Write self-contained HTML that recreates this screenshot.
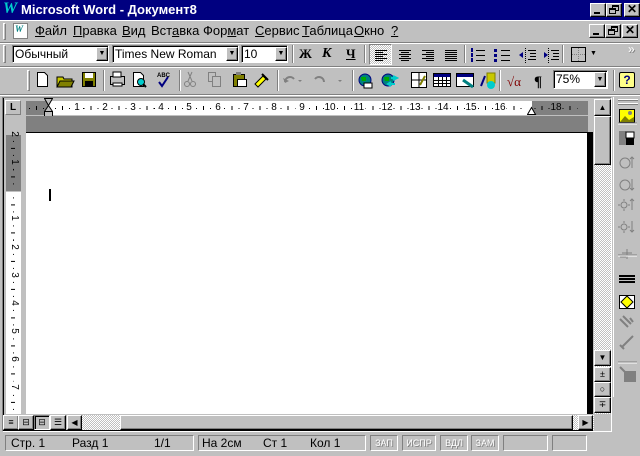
<!DOCTYPE html>
<html><head><meta charset="utf-8"><style>
*{margin:0;padding:0;box-sizing:border-box}
body{width:640px;height:456px;background:#c0c0c0;position:relative;overflow:hidden;font-family:"Liberation Sans",sans-serif;font-size:12px;color:#000}
.a{position:absolute}
.out{border:1px solid;border-color:#fff #000 #000 #fff;box-shadow:inset -1px -1px #808080;background:#c0c0c0}
.in{border:1px solid;border-color:#808080 #fff #fff #808080;}
.sunk{border:1px solid;border-color:#808080 #fff #fff #808080;box-shadow:inset 1px 1px #000;background:#fff}
.hd{position:absolute;width:3px;border:1px solid;border-color:#fff #808080 #808080 #fff}
.sep{position:absolute;width:2px;border-left:1px solid #808080;border-right:1px solid #fff}
.menu span{position:absolute;top:23px;font-size:13px}
u{text-decoration:underline}
.cb{position:absolute;width:16px;height:14px}
.hatch{background:repeating-conic-gradient(#fff 0 25%,#c0c0c0 0 50%) 0 0/2px 2px}
.st{position:absolute;top:435px;height:16px;border:1px solid;border-color:#808080 #fff #fff #808080;font-size:12px;line-height:14px}
.st span{position:absolute;top:0}
.hn span{position:absolute;top:101px;font-size:10px;line-height:14px;width:12px;text-align:center}
.vn span{position:absolute;left:8px;font-size:10px;width:12px;height:10px;line-height:10px;text-align:center;transform:rotate(90deg)}
</style></head><body>
<!-- title bar -->
<div class="a" style="left:0;top:0;width:640px;height:20px;background:#000080"></div>
<div class="a" style="left:3px;top:0;font:italic bold 16px 'Liberation Serif',serif;color:#0cc">W</div>
<div class="a" style="left:21px;top:2px;color:#fff;font-weight:bold;font-size:13px">Microsoft Word - Документ8</div>
<div class="a out cb" style="left:590px;top:3px"><div class="a" style="left:3px;top:8px;width:6px;height:2px;background:#000"></div></div>
<div class="a out cb" style="left:606px;top:3px"><div class="a" style="left:5px;top:1px;width:7px;height:6px;border:1px solid #000;border-top-width:2px"></div><div class="a" style="left:2px;top:4px;width:7px;height:6px;border:1px solid #000;border-top-width:2px;background:#c0c0c0"></div></div>
<div class="a out cb" style="left:624px;top:3px;font-size:12px;font-weight:bold;line-height:11px;text-align:center">✕</div>
<!-- menu bar -->
<div class="a" style="left:0;top:20px;width:640px;height:1px;background:#fff"></div>
<div class="hd" style="left:3px;top:23px;height:17px"></div>
<div class="a" style="left:13px;top:23px;width:15px;height:16px;background:#fff;border:1px solid #808080"><div style="font:italic bold 9px 'Liberation Serif';color:#008080;margin-left:1px">W</div></div>
<div class="menu">
<span style="left:35px"><u>Ф</u>айл</span><span style="left:73px"><u>П</u>равка</span><span style="left:122px"><u>В</u>ид</span><span style="left:151px">Вст<u>а</u>вка</span><span style="left:203px">Фор<u>м</u>ат</span><span style="left:255px"><u>С</u>ервис</span><span style="left:302px"><u>Т</u>аблица</span><span style="left:354px"><u>О</u>кно</span><span style="left:391px"><u>?</u></span>
</div>
<div class="a out cb" style="left:589px;top:24px"><div class="a" style="left:3px;top:8px;width:6px;height:2px;background:#000"></div></div>
<div class="a out cb" style="left:605px;top:24px"><div class="a" style="left:5px;top:1px;width:7px;height:6px;border:1px solid #000;border-top-width:2px"></div><div class="a" style="left:2px;top:4px;width:7px;height:6px;border:1px solid #000;border-top-width:2px;background:#c0c0c0"></div></div>
<div class="a out cb" style="left:622px;top:24px;font-size:12px;font-weight:bold;line-height:11px;text-align:center">✕</div>
<div class="a" style="left:0;top:42px;width:640px;height:1px;background:#808080"></div>
<div class="a" style="left:0;top:43px;width:640px;height:1px;background:#fff"></div>
<!-- formatting toolbar -->
<div class="hd" style="left:3px;top:45px;height:18px"></div>
<div class="a sunk" style="left:12px;top:45px;width:97px;height:18px;padding:1px 2px;font-size:12px">Обычный</div>
<div class="a out" style="left:96px;top:47px;width:12px;height:14px;font-size:7px;text-align:center;line-height:12px">▼</div>
<div class="a sunk" style="left:112px;top:45px;width:127px;height:18px;padding:1px 2px;font-size:12px">Times New Roman</div>
<div class="a out" style="left:226px;top:47px;width:12px;height:14px;font-size:7px;text-align:center;line-height:12px">▼</div>
<div class="a sunk" style="left:241px;top:45px;width:47px;height:18px;padding:1px 2px;font-size:12px">10</div>
<div class="a out" style="left:275px;top:47px;width:12px;height:14px;font-size:7px;text-align:center;line-height:12px">▼</div>
<div class="sep" style="left:292px;top:45px;height:18px"></div>
<div class="a" style="left:299px;top:46px;font:bold 13px 'Liberation Serif',serif">Ж</div>
<div class="a" style="left:322px;top:46px;font:bold italic 14px 'Liberation Serif',serif">К</div>
<div class="a" style="left:346px;top:46px;font:bold 13px 'Liberation Serif',serif;text-decoration:underline">Ч</div>
<div class="sep" style="left:364px;top:45px;height:18px"></div>
<div class="a in hatch" style="left:369px;top:44px;width:23px;height:21px"></div>
<svg class="a" style="left:369px;top:44px" width="100" height="22"><g stroke="#000" stroke-width="1">
<path d="M6 6.5h12M6 8.5h8M6 10.5h12M6 12.5h8M6 14.5h12M6 16.5h8"/>
<path d="M30 6.5h12M32 8.5h8M30 10.5h12M32 12.5h8M30 14.5h12M32 16.5h8"/>
<path d="M53 6.5h12M57 8.5h8M53 10.5h12M57 12.5h8M53 14.5h12M57 16.5h8"/>
<path d="M76 6.5h12M76 8.5h12M76 10.5h12M76 12.5h12M76 14.5h12M76 16.5h12"/></g></svg>
<div class="sep" style="left:464px;top:45px;height:18px"></div>
<svg class="a" style="left:468px;top:44px" width="92" height="22">
<g stroke="#000"><path d="M8 6.5h9M8 11.5h9M8 16.5h9M33 6.5h9M33 11.5h9M33 16.5h9M60 6.5h8M62 9.5h6M62 12.5h6M60 15.5h8M83 6.5h8M85 9.5h6M85 12.5h6M83 15.5h8"/></g>
<g fill="#000080"><rect x="3" y="4" width="2" height="4"/><rect x="3" y="9" width="2" height="4"/><rect x="3" y="14" width="2" height="4"/><rect x="26" y="5" width="3" height="3"/><rect x="26" y="10" width="3" height="3"/><rect x="26" y="15" width="3" height="3"/><path d="M51 11l4-3v6z"/><path d="M76 8l4 3-4 3z"/></g>
<path d="M57.5 4v15M80.5 4v15" stroke="#000" stroke-dasharray="1 1"/></svg>
<div class="sep" style="left:562px;top:45px;height:18px"></div>
<div class="a" style="left:571px;top:47px;width:15px;height:15px;border:1px solid #000"><div class="a" style="left:6px;top:0;height:13px;border-left:1px dotted #808080"></div><div class="a" style="left:0;top:6px;width:13px;border-top:1px dotted #808080"></div></div>
<div class="a" style="left:590px;top:50px;font-size:7px">▼</div>
<div class="a" style="left:628px;top:42px;color:#fff;font-size:12px;text-shadow:1px 1px #808080">»</div>
<div class="a" style="left:0;top:66px;width:640px;height:1px;background:#808080"></div>
<div class="a" style="left:0;top:67px;width:640px;height:1px;background:#fff"></div>
<!-- standard toolbar -->
<div class="hd" style="left:27px;top:70px;height:21px"></div>
<svg class="a" style="left:32px;top:68px" width="310" height="26">
<path d="M5.5 4.5h7l3 3v11h-10z" fill="#fff" stroke="#000"/>
<path d="M25 9h6l1 2h8v8H25z" fill="#c8c800" stroke="#000"/><path d="M28 13h14l-3 6H25z" fill="#808000" stroke="#000"/>
<rect x="50.5" y="4.5" width="13" height="14" fill="#808000" stroke="#000"/><rect x="53" y="5" width="8" height="5" fill="#fff"/><rect x="53" y="13" width="8" height="5" fill="#000"/>
<path d="M78.5 8.5h14v8h-14z" fill="#c0c0c0" stroke="#000"/><rect x="81" y="4" width="8" height="5" fill="#fff" stroke="#000"/><rect x="81" y="15" width="9" height="3" fill="#fff" stroke="#000"/>
<path d="M101.5 4.5h7l3 3v11h-10z" fill="#fff" stroke="#000"/><circle cx="109" cy="14" r="3.5" fill="#0cc" stroke="#000"/><path d="M111 16l3 3" stroke="#000" stroke-width="2"/>
<text x="125" y="9" font-size="6" font-family="Liberation Sans" font-weight="bold">ABC</text><path d="M127 14l3 4 6-9" stroke="#000080" stroke-width="2" fill="none"/>
<g stroke="#808080" fill="none"><circle cx="155" cy="16" r="2.5"/><circle cx="161" cy="16" r="2.5"/><path d="M156 13l4-9M160 13l-4-9"/>
<rect x="176.5" y="4.5" width="7" height="9" fill="#c0c0c0"/><rect x="180.5" y="8.5" width="8" height="10" fill="#c0c0c0"/></g>
<rect x="201.5" y="6.5" width="11" height="12" fill="#808000" stroke="#000"/><rect x="205.5" y="11.5" width="9" height="7" fill="#fff" stroke="#000"/><rect x="204" y="4" width="5" height="3" fill="#808080"/>
<path d="M223 16l8-8 3 3-8 8z" fill="#ff0" stroke="#000"/><path d="M230 6l6 6" stroke="#000" stroke-width="2"/>
<path d="M253 14a5 5 0 0 1 9-3" stroke="#808080" stroke-width="2" fill="none"/><path d="M251 10l2 5 4-2" fill="#808080"/><path d="M266 12l2 2 2-2z" fill="#808080"/>
<path d="M292 14a5 5 0 0 0-9-3" stroke="#808080" stroke-width="2" fill="none"/><path d="M306 12l2 2 2-2z" fill="#808080"/>
</svg>
<div class="sep" style="left:103px;top:70px;height:21px"></div>
<div class="sep" style="left:179px;top:70px;height:21px"></div>
<div class="sep" style="left:277px;top:70px;height:21px"></div>
<div class="sep" style="left:352px;top:70px;height:21px"></div>
<svg class="a" style="left:355px;top:68px" width="255" height="26">
<circle cx="10" cy="12" r="6" fill="#008080" stroke="#000080"/><path d="M6 9h5v4H7z" fill="#0a0"/><rect x="9" y="15" width="8" height="5" fill="#fff" stroke="#000"/>
<circle cx="33" cy="12" r="6" fill="#008080" stroke="#000080"/><path d="M29 9h5v4h-4z" fill="#0a0"/><path d="M36 10h6M38 8l4 2-4 2M34 16h6M36 14l-3 2 3 2" stroke="#0cc" stroke-width="2" fill="none"/>
<rect x="56.5" y="4.5" width="15" height="15" fill="#fff" stroke="#000"/><path d="M64 5v14M57 12h14" stroke="#000"/><path d="M65 17l5-9" stroke="#808000" stroke-width="2"/>
<rect x="78.5" y="5.5" width="17" height="13" fill="#fff" stroke="#000"/><rect x="79" y="6" width="16" height="3" fill="#000080"/><path d="M79 12.5h16M79 15.5h16M83.5 9v9M87.5 9v9M91.5 9v9" stroke="#000"/>
<rect x="101.5" y="5.5" width="17" height="13" fill="#fff" stroke="#000"/><rect x="102" y="6" width="16" height="3" fill="#000080"/><path d="M108 12l10 7" stroke="#008080" stroke-width="3"/>
<rect x="132" y="5" width="8" height="10" fill="#c8c800" stroke="#808000"/><circle cx="136" cy="17" r="4" fill="#0cc"/><path d="M126 18l4-10" stroke="#000080" stroke-width="2"/>
<text x="152" y="18" font-size="13" fill="#800000" font-family="Liberation Serif">√α</text>
<text x="179" y="18" font-size="15" font-weight="bold" font-family="Liberation Serif">¶</text>
</svg>
<div class="sep" style="left:499px;top:70px;height:21px"></div>
<div class="a sunk" style="left:553px;top:70px;width:55px;height:19px;padding:1px 2px;font-size:12px">75%</div>
<div class="a out" style="left:594px;top:72px;width:12px;height:15px;font-size:7px;text-align:center;line-height:13px">▼</div>
<div class="sep" style="left:613px;top:70px;height:21px"></div>
<div class="a" style="left:619px;top:72px;width:16px;height:16px;background:#ff8;border:1px solid #000;border-radius:2px;font-weight:bold;font-size:12px;color:#000080;text-align:center;line-height:14px">?</div>
<div class="a" style="left:0;top:94px;width:640px;height:1px;background:#808080"></div>
<div class="a" style="left:0;top:95px;width:640px;height:1px;background:#fff"></div>
<!-- document frame -->
<div class="a" style="left:2px;top:97px;width:610px;height:335px;border:1px solid;border-color:#808080 #fff #fff #808080"></div>
<div class="a" style="left:3px;top:98px;width:1px;height:333px;background:#000"></div>
<!-- ruler -->
<div class="a" style="left:5px;top:100px;width:16px;height:15px;border:1px solid;border-color:#fff #808080 #808080 #fff;font-weight:bold;font-size:10px;text-align:center;line-height:13px">L</div>
<div class="a" style="left:26px;top:101px;width:562px;height:14px;background:#808080"></div>
<div class="a" style="left:48px;top:101px;width:484px;height:14px;background:#fff"></div>
<div class="a" style="left:26px;top:108px;width:562px;height:1px;background:repeating-linear-gradient(90deg,transparent 0 6.55px,#000 6.55px 7.55px,transparent 7.55px 14.1px);background-position:22.5px 0"></div>
<div class="a" style="left:26px;top:106px;width:562px;height:4px;background:repeating-linear-gradient(90deg,transparent 0 13.6px,#000 13.6px 14.6px,transparent 14.6px 28.2px);background-position:22.5px 0"></div>
<div class="hn">
<span style="left:71px">1</span><span style="left:99px">2</span><span style="left:127px">3</span><span style="left:155px">4</span><span style="left:183px">5</span><span style="left:212px">6</span><span style="left:240px">7</span><span style="left:268px">8</span><span style="left:296px">9</span><span style="left:324px">10</span><span style="left:353px">11</span><span style="left:381px">12</span><span style="left:409px">13</span><span style="left:437px">14</span><span style="left:465px">15</span><span style="left:494px">16</span><span style="left:550px">18</span>
</div>
<div class="a" style="left:44px;top:98px;width:9px;height:19px"><svg width="9" height="19"><path d="M0.5 0.5h8l-4 7z M4.5 7.5l4 6h-8z" fill="#c0c0c0" stroke="#000"/><rect x="0.5" y="13.5" width="8" height="5" fill="#c0c0c0" stroke="#000"/></svg></div>
<svg class="a" style="left:527px;top:106px" width="10" height="9"><path d="M0.5 8.5l4-7 4 7z" fill="#fff" stroke="#000"/></svg>
<div class="a" style="left:26px;top:116px;width:562px;height:16px;background:#808080"></div>
<!-- page -->
<div class="a" style="left:26px;top:132px;width:562px;height:282px;background:#fff"></div>
<div class="a" style="left:26px;top:132px;width:562px;height:1px;background:#000"></div>
<div class="a" style="left:587px;top:132px;width:6px;height:282px;background:#000"></div>
<div class="a" style="left:49px;top:189px;width:2px;height:12px;background:#000"></div>
<!-- vertical ruler -->
<div class="a" style="left:6px;top:132px;width:15px;height:282px;background:#c0c0c0"></div>
<div class="a" style="left:6px;top:135px;width:15px;height:56px;background:#808080"></div>
<div class="a" style="left:6px;top:192px;width:15px;height:222px;background:#fff"></div>
<div class="a" style="left:13px;top:135px;width:1px;height:278px;background:repeating-linear-gradient(180deg,transparent 0 6.55px,#000 6.55px 7.55px,transparent 7.55px 14.1px);background-position:0 -0.6px"></div>
<div class="a" style="left:11px;top:135px;width:4px;height:278px;background:repeating-linear-gradient(180deg,transparent 0 13.6px,#000 13.6px 14.6px,transparent 14.6px 28.2px);background-position:0 -0.6px"></div>
<div class="vn">
<span style="top:129px">2</span><span style="top:157px">1</span><span style="top:213px">1</span><span style="top:242px">2</span><span style="top:270px">3</span><span style="top:298px">4</span><span style="top:326px">5</span><span style="top:354px">6</span><span style="top:382px">7</span>
</div>
<!-- vertical scrollbar -->
<div class="a hatch" style="left:594px;top:99px;width:17px;height:315px"></div>
<div class="a out" style="left:594px;top:99px;width:17px;height:17px;font-size:8px;text-align:center;line-height:15px">▲</div>
<div class="a out" style="left:594px;top:116px;width:17px;height:49px"></div>
<div class="a out" style="left:594px;top:350px;width:17px;height:16px;font-size:8px;text-align:center;line-height:14px">▼</div>
<div class="a out" style="left:594px;top:367px;width:17px;height:15px;font-size:9px;text-align:center;line-height:12px">±</div>
<div class="a out" style="left:594px;top:382px;width:17px;height:15px;font-size:9px;text-align:center;line-height:12px">○</div>
<div class="a out" style="left:594px;top:397px;width:17px;height:16px;font-size:9px;text-align:center;line-height:13px">∓</div>
<!-- horizontal scrollbar -->
<div class="a hatch" style="left:82px;top:415px;width:512px;height:15px"></div>
<div class="a out" style="left:3px;top:415px;width:16px;height:15px;font-size:9px;text-align:center;line-height:12px">≡</div>
<div class="a out" style="left:18px;top:415px;width:16px;height:15px;font-size:9px;text-align:center;line-height:12px">⊟</div>
<div class="a in" style="left:34px;top:415px;width:16px;height:15px;font-size:9px;text-align:center;line-height:12px;box-shadow:inset 1px 1px #000">⊟</div>
<div class="a out" style="left:50px;top:415px;width:16px;height:15px;font-size:9px;text-align:center;line-height:12px">☰</div>
<div class="a out" style="left:67px;top:415px;width:15px;height:15px;font-size:8px;text-align:center;line-height:13px">◀</div>
<div class="a out" style="left:120px;top:415px;width:453px;height:15px"></div>
<div class="a out" style="left:578px;top:415px;width:15px;height:15px;font-size:8px;text-align:center;line-height:13px">▶</div>
<div class="a" style="left:3px;top:430px;width:590px;height:1px;background:#000"></div>
<!-- right picture toolbar -->
<div class="a" style="left:613px;top:97px;width:1px;height:300px;background:#fff"></div>
<div class="a" style="left:618px;top:99px;width:20px;height:2px;border-top:1px solid #fff;border-bottom:1px solid #808080"></div>
<div class="a" style="left:618px;top:103px;width:20px;height:2px;border-top:1px solid #fff;border-bottom:1px solid #808080"></div>
<svg class="a" style="left:614px;top:105px" width="26" height="285">
<rect x="5.5" y="4.5" width="15" height="13" fill="#ff0" stroke="#000"/><path d="M6 17l5-6 4 4 5-3v5z" fill="#808000"/><circle cx="16" cy="8" r="2" fill="#808080"/>
<path d="M4 18h19" stroke="#808080"/><path d="M4 19h19" stroke="#fff"/>
<rect x="5" y="26" width="7" height="14" fill="#808080"/><rect x="12" y="27" width="8" height="6" fill="#fff" stroke="#000"/><rect x="12" y="33" width="8" height="7" fill="#000"/>
<g fill="none" stroke="#808080"><circle cx="11" cy="58" r="5"/><path d="M18 52v11M16 54l2-2 2 2"/><circle cx="11" cy="80" r="5"/><path d="M18 74v11M16 83l2 2 2-2"/>
<circle cx="10" cy="100" r="3"/><path d="M10 94v2M10 104v2M4 100h2M14 100h2M18 94v11M16 96l2-2 2 2"/>
<circle cx="10" cy="122" r="3"/><path d="M10 116v2M10 126v2M4 122h2M14 122h2M18 116v11M16 125l2 2 2-2"/>
<path d="M4 150h19" stroke="#808080"/><path d="M8 148h10M13 144v10M6 152h6"/></g>
<path d="M4 151h19" stroke="#fff"/>
<path d="M5 171h16M5 174h16M5 177h16" stroke="#000" stroke-width="2"/>
<rect x="5.5" y="190.5" width="15" height="13" fill="#fff" stroke="#000"/><path d="M13 191l6 6-6 6-6-6z" fill="#ff0" stroke="#000"/>
<g stroke="#808080" fill="none" stroke-width="2"><path d="M6 214l8 8M9 211l8 8M16 213l3 4"/><path d="M6 240l4 4M8 242l11-11"/></g>
<path d="M4 257h19" stroke="#808080"/><path d="M4 258h19" stroke="#fff"/>
<rect x="10" y="266" width="12" height="11" fill="#808080"/><path d="M6 262l6 6" stroke="#808080" stroke-width="2"/>
</svg>
<!-- status bar -->
<div class="st" style="left:5px;width:189px"><span style="left:5px">Стр. 1</span><span style="left:66px">Разд 1</span><span style="left:148px">1/1</span></div>
<div class="st" style="left:198px;width:168px"><span style="left:3px">На 2см</span><span style="left:64px">Ст 1</span><span style="left:111px">Кол 1</span></div>
<div class="st" style="left:370px;width:28px;font-size:9px;text-align:center;color:#fff;text-shadow:1px 1px #808080">ЗАП</div>
<div class="st" style="left:402px;width:34px;font-size:9px;text-align:center;color:#fff;text-shadow:1px 1px #808080">ИСПР</div>
<div class="st" style="left:440px;width:28px;font-size:9px;text-align:center;color:#fff;text-shadow:1px 1px #808080">ВДЛ</div>
<div class="st" style="left:471px;width:28px;font-size:9px;text-align:center;color:#fff;text-shadow:1px 1px #808080">ЗАМ</div>
<div class="st" style="left:503px;width:45px"></div>
<div class="st" style="left:552px;width:35px"></div>
</body></html>
